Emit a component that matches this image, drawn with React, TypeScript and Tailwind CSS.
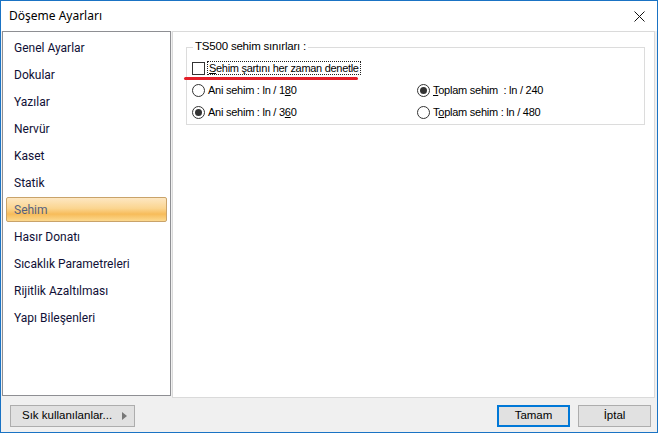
import React from "react";

const items = [
  "Genel Ayarlar",
  "Dokular",
  "Yazılar",
  "Nervür",
  "Kaset",
  "Statik",
  "Sehim",
  "Hasır Donatı",
  "Sıcaklık Parametreleri",
  "Rijitlik Azaltılması",
  "Yapı Bileşenleri",
];

function Radio({ checked }: { checked?: boolean }) {
  return (
    <span className="w-[13px] h-[13px] rounded-full border border-[#333] bg-white flex items-center justify-center shrink-0">
      {checked && <span className="w-[7px] h-[7px] rounded-full bg-[#333]" />}
    </span>
  );
}

function RadioRow({ checked, children }: { checked?: boolean; children: React.ReactNode }) {
  return (
    <div className="flex items-center gap-[3px] h-[14px]">
      <Radio checked={checked} />
      <span className="leading-none">{children}</span>
    </div>
  );
}

export default function App() {
  return (
    <div className="w-[658px] h-[433px] border border-[#1a73c4] bg-[#f0f0f0] flex flex-col font-['Liberation_Sans',sans-serif] text-[11px] text-black overflow-hidden">
      {/* title bar */}
      <div className="h-[30px] bg-white flex items-center justify-between pl-[8px] pr-[9px] shrink-0">
        <span className="font-['Noto_Sans',sans-serif] text-[12px] text-black">Döşeme Ayarları</span>
        <svg width="11" height="11" viewBox="0 0 11 11" className="mr-[3px]">
          <path d="M0.5 0.5 L10.5 10.5 M10.5 0.5 L0.5 10.5" stroke="#111" strokeWidth="1" />
        </svg>
      </div>

      {/* main */}
      <div className="h-[367px] flex pl-[1px] shrink-0">
        <div className="w-[169px] h-[365px] border border-[#8e8f93] bg-white pt-[2px] pl-[3px] pr-[3px] flex flex-col font-['Roboto',sans-serif] text-[12px] text-[#101036]">
          {items.map((it) => (
            <div key={it} className="h-[27px] flex flex-col justify-center">
              {it === "Sehim" ? (
                <div className="h-[25px] rounded-[2px] border border-[#c9a36a] bg-[linear-gradient(#fde7c2,#fbd590_45%,#f7bc5a_70%,#fcd98f)] flex items-center pl-[7px] text-[#55617e]">
                  {it}
                </div>
              ) : (
                <div className="h-[25px] flex items-center pl-[8px]">{it}</div>
              )}
            </div>
          ))}
        </div>

        <div className="ml-[1px] w-[483px] h-[367px] bg-white border border-[#dadada] pt-[15px] pl-[13px] pr-[9px]">
          <div className="relative border border-[#dcdcdc] pt-[13px] pb-[5px] pl-[5px]">
            <span className="absolute -top-[7px] left-[6px] bg-white px-[2px] leading-none text-[11.5px] tracking-[-0.2px]">
              TS500 sehim sınırları :
            </span>
            <div className="flex items-center h-[14px]">
              <span className="w-[13px] h-[13px] border border-[#333] bg-white shrink-0" />
              <span className="ml-[2px] border border-dotted border-[#222] px-[1px] leading-[12px] tracking-[-0.3px]">
                <span className="underline">S</span>ehim şartını her zaman denetle
              </span>
            </div>
            <div className="absolute left-[-3px] top-[29px] w-[174px] h-[3px] rounded-full bg-[#e3202a]" />
            <div className="grid grid-cols-[225px_1fr] gap-y-[8px] mt-[8px] tracking-[-0.25px]">
              <RadioRow>
                Ani sehim : ln / 1<span className="underline">8</span>0
              </RadioRow>
              <RadioRow checked>
                <span className="underline">T</span>oplam sehim&nbsp; : ln / 240
              </RadioRow>
              <RadioRow checked>
                Ani sehim : ln / 3<span className="underline">6</span>0
              </RadioRow>
              <RadioRow>
                T<span className="underline">o</span>plam sehim : ln / 480
              </RadioRow>
            </div>
          </div>
        </div>
      </div>

      {/* bottom bar */}
      <div className="flex-1 flex items-start pt-[7px] pl-[9px] pr-[6px]">
        <button className="w-[125px] h-[22px] bg-[#e1e1e1] border border-[#adadad] flex items-center justify-between pl-[11px] pr-[7px] text-[11.5px]">
          <span>Sık kullanılanlar...</span>
          <svg width="5" height="8" viewBox="0 0 5 8">
            <path d="M0 0 L5 4 L0 8 Z" fill="#777" />
          </svg>
        </button>
        <div className="flex-1" />
        <button className="w-[73px] h-[22px] bg-[#e1e1e1] border-2 border-[#0078d7] flex items-center justify-center text-[11.5px]">
          Tamam
        </button>
        <button className="ml-[8px] w-[73px] h-[22px] bg-[#e1e1e1] border border-[#adadad] flex items-center justify-center text-[11.5px]">
          İptal
        </button>
      </div>
    </div>
  );
}
